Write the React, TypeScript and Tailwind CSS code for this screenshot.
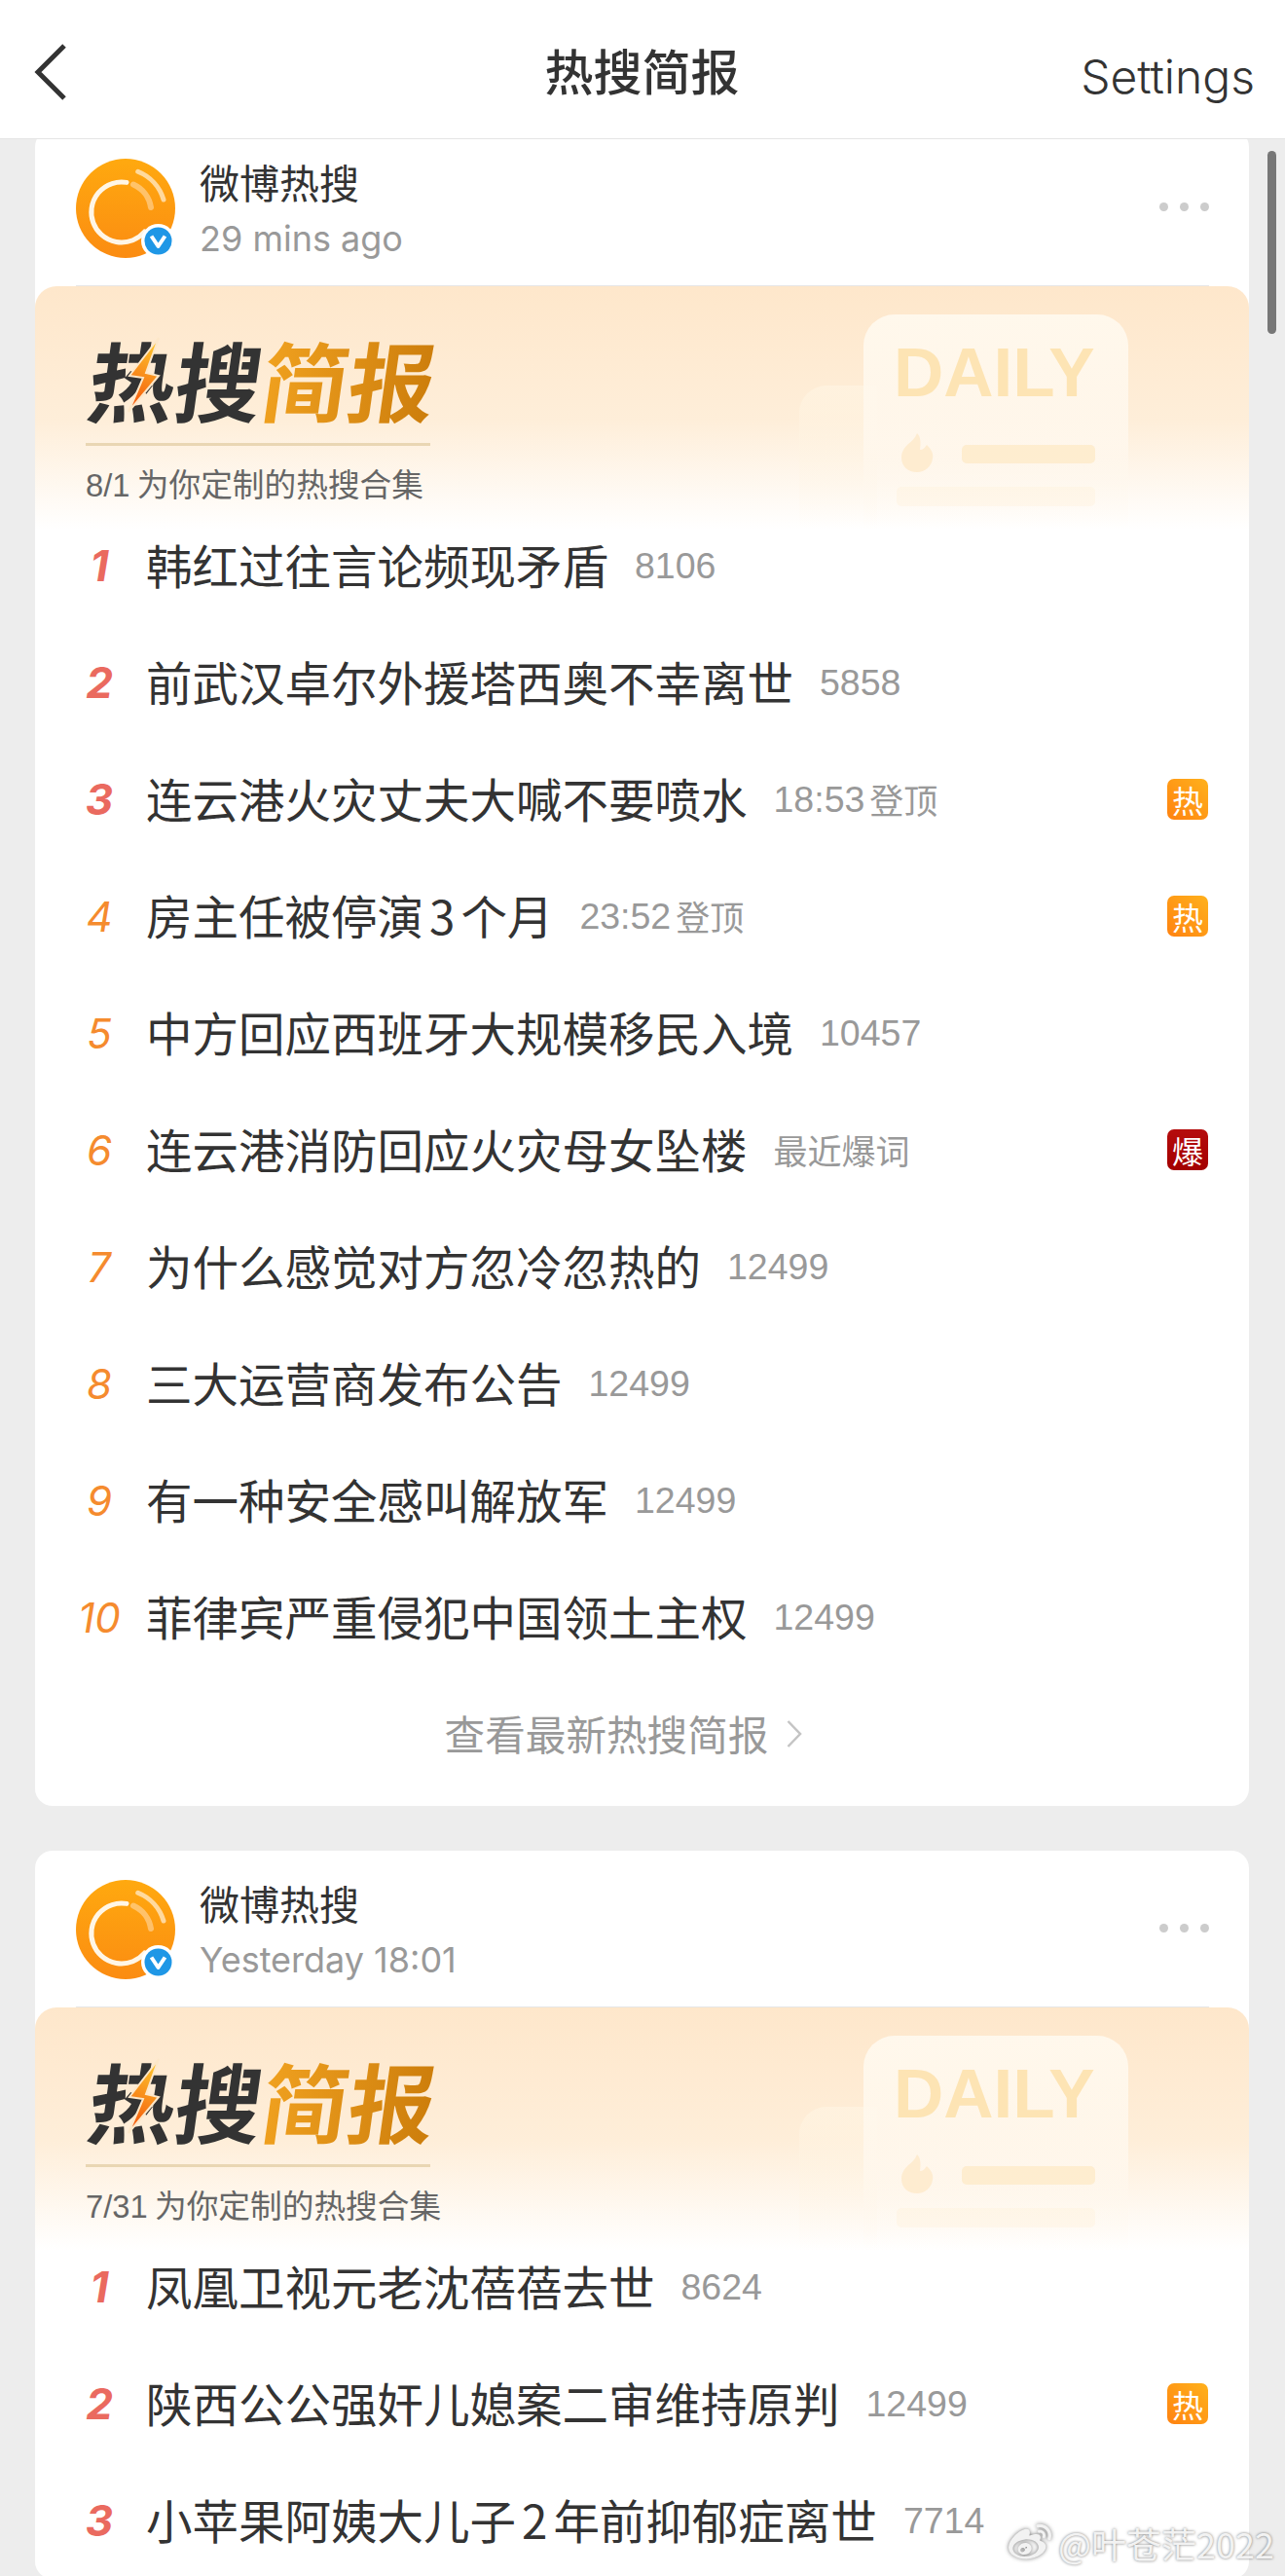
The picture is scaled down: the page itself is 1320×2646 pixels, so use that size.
import type { ReactNode } from "react";
import { FaWeibo } from "react-icons/fa";

type Topic = {
  title: ReactNode;
  count?: string;
  note?: string;
  badge?: "hot" | "boom";
};

const firstDigest: Topic[] = [
  { title: "韩红过往言论频现矛盾", count: "8106" },
  { title: "前武汉卓尔外援塔西奥不幸离世", count: "5858" },
  { title: "连云港火灾丈夫大喊不要喷水", count: "18:53", note: "登顶", badge: "hot" },
  { title: <>房主任被停演<span className="mx-[6px]">3</span>个月</>, count: "23:52", note: "登顶", badge: "hot" },
  { title: "中方回应西班牙大规模移民入境", count: "10457" },
  { title: "连云港消防回应火灾母女坠楼", note: "最近爆词", badge: "boom" },
  { title: "为什么感觉对方忽冷忽热的", count: "12499" },
  { title: "三大运营商发布公告", count: "12499" },
  { title: "有一种安全感叫解放军", count: "12499" },
  { title: "菲律宾严重侵犯中国领土主权", count: "12499" },
];

const secondDigest: Topic[] = [
  { title: "凤凰卫视元老沈蓓蓓去世", count: "8624" },
  { title: "陕西公公强奸儿媳案二审维持原判", count: "12499", badge: "hot" },
  { title: <>小苹果阿姨大儿子<span className="mx-[6px]">2</span>年前抑郁症离世</>, count: "7714" },
];

function Avatar() {
  return (
    <div className="relative h-[102px] w-[102px] shrink-0">
      <svg viewBox="0 0 102 102" className="h-full w-full">
        <defs>
          <linearGradient id="avatarFill" x1="0.5" y1="0" x2="0.5" y2="1">
            <stop offset="0" stopColor="#ffa90f" />
            <stop offset="1" stopColor="#fb8c12" />
          </linearGradient>
        </defs>
        <circle cx="51" cy="51" r="51" fill="url(#avatarFill)" />
        <path d="M52 24.4A31 31 0 1 0 70.5 75" fill="none" stroke="#fff6e6" strokeWidth="5" strokeLinecap="round" />
        <path d="M59 26.5A31 31 0 0 1 77 50" fill="none" stroke="#ffe6c4" strokeWidth="6" strokeLinecap="round" opacity="0.5" />
        <path d="M63.7 13.3A45 45 0 0 1 90 42" fill="none" stroke="#ffeccd" strokeWidth="5" strokeLinecap="round" opacity="0.75" />
      </svg>
      <svg viewBox="0 0 35 35" className="absolute left-[67px] top-[67px] h-[35px] w-[35px]">
        <circle cx="17.5" cy="17.5" r="17.5" fill="#fff" />
        <circle cx="17.5" cy="17.5" r="14" fill="#1f97e6" />
        <path d="M10.5 12.5L17.5 23L24.5 12.5" fill="none" stroke="#fff" strokeWidth="4" strokeLinejoin="round" />
      </svg>
    </div>
  );
}

function Illustration() {
  return (
    <div className="absolute inset-0 overflow-hidden">
      <div className="absolute left-[785px] top-[102px] h-[148px] w-[80px] rounded-tl-[28px] bg-linear-to-b from-[#fff4e2]/70 to-white/0" />
      <div className="absolute left-[851px] top-[29px] h-[221px] w-[272px] rounded-t-[32px] bg-linear-to-b from-[#fff8ec] via-[#fff8ee]/80 via-60% to-white/0">
        <div className="absolute left-[31px] top-[25px] font-['Liberation_Sans',sans-serif] text-[71px] font-bold leading-[70px] text-[#fde4b4]">
          DAILY
        </div>
        <svg viewBox="0 0 34 40" className="absolute left-[38px] top-[122px] h-[40px] w-[34px]">
          <path
            d="M17 0C21 4 21 10 20 17C23 17 25 15 27 12C32 17 34 21 33 26C32 34 25 40 17 40C8 40 1 34 1 25C1 19 4 15 8 11C12 8 15 5 17 0Z"
            fill="#feecd0"
          />
        </svg>
        <div className="absolute left-[101px] top-[134px] h-[19px] w-[137px] rounded-[5px] bg-[#fde4b4]/50" />
        <div className="absolute left-[34px] top-[177px] h-[20px] w-[204px] rounded-[5px] bg-[#fde4b4]/15" />
      </div>
    </div>
  );
}

function DigestLogo() {
  return (
    <div className="relative h-[106px] w-[360px]">
      <div className="flex -skew-x-[8deg] pl-[4px] font-['Noto_Sans_CJK_SC',sans-serif] text-[89px] font-bold leading-[106px]">
        <span className="text-[#333333]">热搜</span>
        <span className="bg-linear-to-r from-[#f0a11f] to-[#cc7d0b] bg-clip-text text-transparent">简报</span>
      </div>
      <svg viewBox="0 0 34 78" className="absolute left-[43px] top-[10px] h-[78px] w-[34px]">
        <defs>
          <linearGradient id="boltFill" x1="0.6" y1="0" x2="0.4" y2="1">
            <stop offset="0" stopColor="#fdc62c" />
            <stop offset="1" stopColor="#f4560c" />
          </linearGradient>
        </defs>
        <path d="M32 1L2 40L16 42L1 77L32 40L19 37Z" fill="url(#boltFill)" stroke="#fde7c8" strokeWidth="2" />
      </svg>
    </div>
  );
}

function TopicRow({ rank, topic }: { rank: number; topic: Topic }) {
  const top = rank <= 3;
  return (
    <div className="flex h-[120px] items-center px-[42px]">
      <span
        className={
          top
            ? "ml-[-2px] w-[52px] shrink-0 text-center font-['Inter',sans-serif] text-[44px] font-bold italic text-[#ea6a5f]"
            : "ml-[-2px] w-[52px] shrink-0 text-center font-['Inter',sans-serif] text-[42px] font-normal italic text-[#f58b2e]"
        }
      >
        {rank}
      </span>
      <span className="ml-[22px] mt-[-2px] whitespace-nowrap text-[47.5px] leading-[60px] text-[#333333]">{topic.title}</span>
      <span className="ml-[27px] flex items-center gap-[5px] whitespace-nowrap text-[#999999]">
        {topic.count && <span className="font-['Liberation_Sans',sans-serif] text-[37.5px]">{topic.count}</span>}
        {topic.note && <span className="text-[35px]">{topic.note}</span>}
      </span>
      {topic.badge === "hot" && (
        <span className="ml-auto flex h-[42px] w-[42px] items-center justify-center rounded-[7px] bg-linear-to-tr from-[#ff8210] to-[#ffb11c] text-[32px] leading-none text-white">
          热
        </span>
      )}
      {topic.badge === "boom" && (
        <span className="ml-auto flex h-[42px] w-[42px] items-center justify-center rounded-[7px] bg-linear-to-b from-[#b50d0d] to-[#a30000] text-[32px] leading-none text-white">
          爆
        </span>
      )}
    </div>
  );
}

function DigestCard({
  time,
  date,
  topics,
  footer,
  className,
}: {
  time: string;
  date: string;
  topics: Topic[];
  footer?: boolean;
  className?: string;
}) {
  return (
    <article className={`overflow-hidden rounded-[18px] bg-white ${className ?? ""}`}>
      <header className="ml-[42px] mr-[41px] flex h-[161px] border-b border-[#e6e6e6] pt-[30px]">
        <Avatar />
        <div className="ml-[25px] flex flex-col">
          <span className="mt-[-3px] text-[41px] leading-[52px] text-[#333333]">微博热搜</span>
          <span className="mt-[9px] font-['Inter',sans-serif] text-[36px] leading-[48px] text-[#999999]">{time}</span>
        </div>
        <div className="ml-auto mt-[45px] flex h-[9px] gap-[12px]">
          <i className="h-[9px] w-[9px] rounded-full bg-[#cccccc]" />
          <i className="h-[9px] w-[9px] rounded-full bg-[#cccccc]" />
          <i className="h-[9px] w-[9px] rounded-full bg-[#cccccc]" />
        </div>
      </header>

      <section className="relative -mb-[23px] h-[250px] rounded-t-[22px] bg-linear-to-b from-[#fee7cb] via-[#feeed9] via-55% to-white">
        <Illustration />
        <div className="relative pl-[52px] pt-[42px]">
          <DigestLogo />
          <div className="mt-[13px] h-[3px] w-[354px] bg-[#e9d6b3]" />
          <p className="mt-[19px] text-[32.7px] leading-[38px] text-[#666666]">
            <span className="font-['Liberation_Sans',sans-serif]">{date}</span> 为你定制的热搜合集
          </p>
        </div>
      </section>

      <div className="relative">
        {topics.map((topic, i) => (
          <TopicRow key={i} rank={i + 1} topic={topic} />
        ))}
      </div>

      {footer && (
        <div className="flex h-[134px] items-start justify-center pr-[38px] pt-[35px] text-[41.6px] leading-[48px] text-[#999999]">
          <span>查看最新热搜简报</span>
          <svg viewBox="0 0 16 28" className="ml-[19px] mt-[11px] h-[28px] w-[16px]">
            <path d="M1.5 1L14 14L1.5 27" fill="none" stroke="#c4c4c4" strokeWidth="2.5" />
          </svg>
        </div>
      )}
    </article>
  );
}

export default function App() {
  return (
    <div className="relative h-[2646px] w-[1320px] overflow-hidden bg-[#ededed] font-['Noto_Sans_CJK_SC',sans-serif]">
      <nav className="relative z-10 grid h-[143px] grid-cols-3 items-center border-b border-[#e4e4e4] bg-white pl-[35px] pr-[31px] text-[#333333]">
        <svg viewBox="0 0 34 58" className="mt-[6px] h-[58px] w-[34px]">
          <path d="M31 2L4 29L31 56" fill="none" stroke="#333333" strokeWidth="5" />
        </svg>
        <h1 className="mt-[-1px] pr-[5px] text-center text-[50px] font-medium leading-[60px]">热搜简报</h1>
        <span className="mt-[16px] text-right font-['Inter',sans-serif] text-[48px] font-light">Settings</span>
      </nav>

      <main className="flex flex-col gap-[46px] pl-[36px] pr-[37px]">
        <DigestCard className="-mt-[10px]" time="29 mins ago" date="8/1" topics={firstDigest} footer />
        <DigestCard time="Yesterday 18:01" date="7/31" topics={secondDigest} />
      </main>

      {/* scrollbar thumb */}
      <div className="absolute left-[1302px] top-[155px] h-[188px] w-[9px] rounded-full bg-[#777777]" />

      {/* watermark sits on top of the list */}
      <div className="absolute left-[1033px] top-[2590px] flex items-center text-[#f2f2f2]">
        <FaWeibo className="h-[44px] w-[50px] drop-shadow-[0_0_2px_rgba(0,0,0,0.55)]" />
        <span className="ml-[4px] text-[36px] leading-[44px] [text-shadow:0_0_3px_rgba(0,0,0,0.55)]">@叶苍茫2022</span>
      </div>
    </div>
  );
}
